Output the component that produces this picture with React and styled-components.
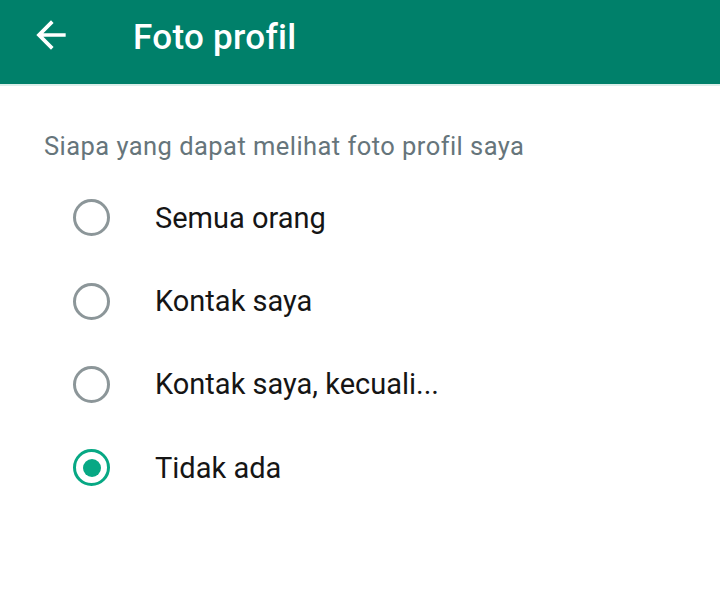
import React, { useState } from 'react';
import styled, { createGlobalStyle } from 'styled-components';

const GlobalStyle = createGlobalStyle`
  body {
    margin: 0;
    background: #fff;
    font-family: Roboto, 'Noto Sans', sans-serif;
  }
`;

const options = ['Semua orang', 'Kontak saya', 'Kontak saya, kecuali...', 'Tidak ada'];

const App = () => {
  const [selected, setSelected] = useState(3);

  return (
    <Page>
      <GlobalStyle />
      <Header>
        <BackButton aria-label="Kembali">
          <svg width="44" height="44" viewBox="0 0 24 24">
            <path d="M20 11H7.83l5.59-5.59L12 4l-8 8 8 8 1.41-1.41L7.83 13H20v-2z" fill="#fff" />
          </svg>
        </BackButton>
        <Title>Foto profil</Title>
      </Header>
      <Content>
        <Caption>Siapa yang dapat melihat foto profil saya</Caption>
        <List>
          {options.map((label, i) => (
            <Option key={label} onClick={() => setSelected(i)}>
              <Radio checked={selected === i} />
              <Label>{label}</Label>
            </Option>
          ))}
        </List>
      </Content>
    </Page>
  );
};

const Page = styled.div`
  width: 720px;
  height: 604px;
  background: #fff;
`;

const Header = styled.header`
  display: flex;
  align-items: center;
  height: 86px;
  background: #00806a;
  border-bottom: 2px solid #dcefea;
  padding-left: 29px;
  box-sizing: border-box;
`;

const BackButton = styled.button`
  display: flex;
  align-items: center;
  justify-content: center;
  padding: 0;
  border: none;
  background: none;
  width: 44px;
  height: 44px;
  margin-right: 60px;
  margin-top: -14px;
`;

const Title = styled.h1`
  margin: -10px 0 0;
  font-size: 35px;
  font-weight: 500;
  color: #fff;
  letter-spacing: 0.3px;
`;

const Content = styled.main`
  padding: 46px 0 0 44px;
`;

const Caption = styled.p`
  margin: 0;
  font-size: 25.5px;
  color: #66757b;
  line-height: 28px;
  letter-spacing: 0.45px;
`;

const List = styled.div`
  display: flex;
  flex-direction: column;
  margin-top: 16px;
`;

const Option = styled.div`
  display: flex;
  align-items: center;
  height: 83.4px;
  padding-left: 29px;
  cursor: pointer;
`;

const Radio = styled.span`
  width: 37px;
  height: 37px;
  box-sizing: border-box;
  border-radius: 50%;
  border: 3.5px solid ${(p) => (p.checked ? '#07a884' : '#8c9699')};
  display: flex;
  align-items: center;
  justify-content: center;
  margin-right: 45px;

  &::after {
    content: '';
    width: 18px;
    height: 18px;
    border-radius: 50%;
    background: #07a884;
    display: ${(p) => (p.checked ? 'block' : 'none')};
  }
`;

const Label = styled.span`
  font-size: 29px;
  color: #151515;
`;

export default App;
